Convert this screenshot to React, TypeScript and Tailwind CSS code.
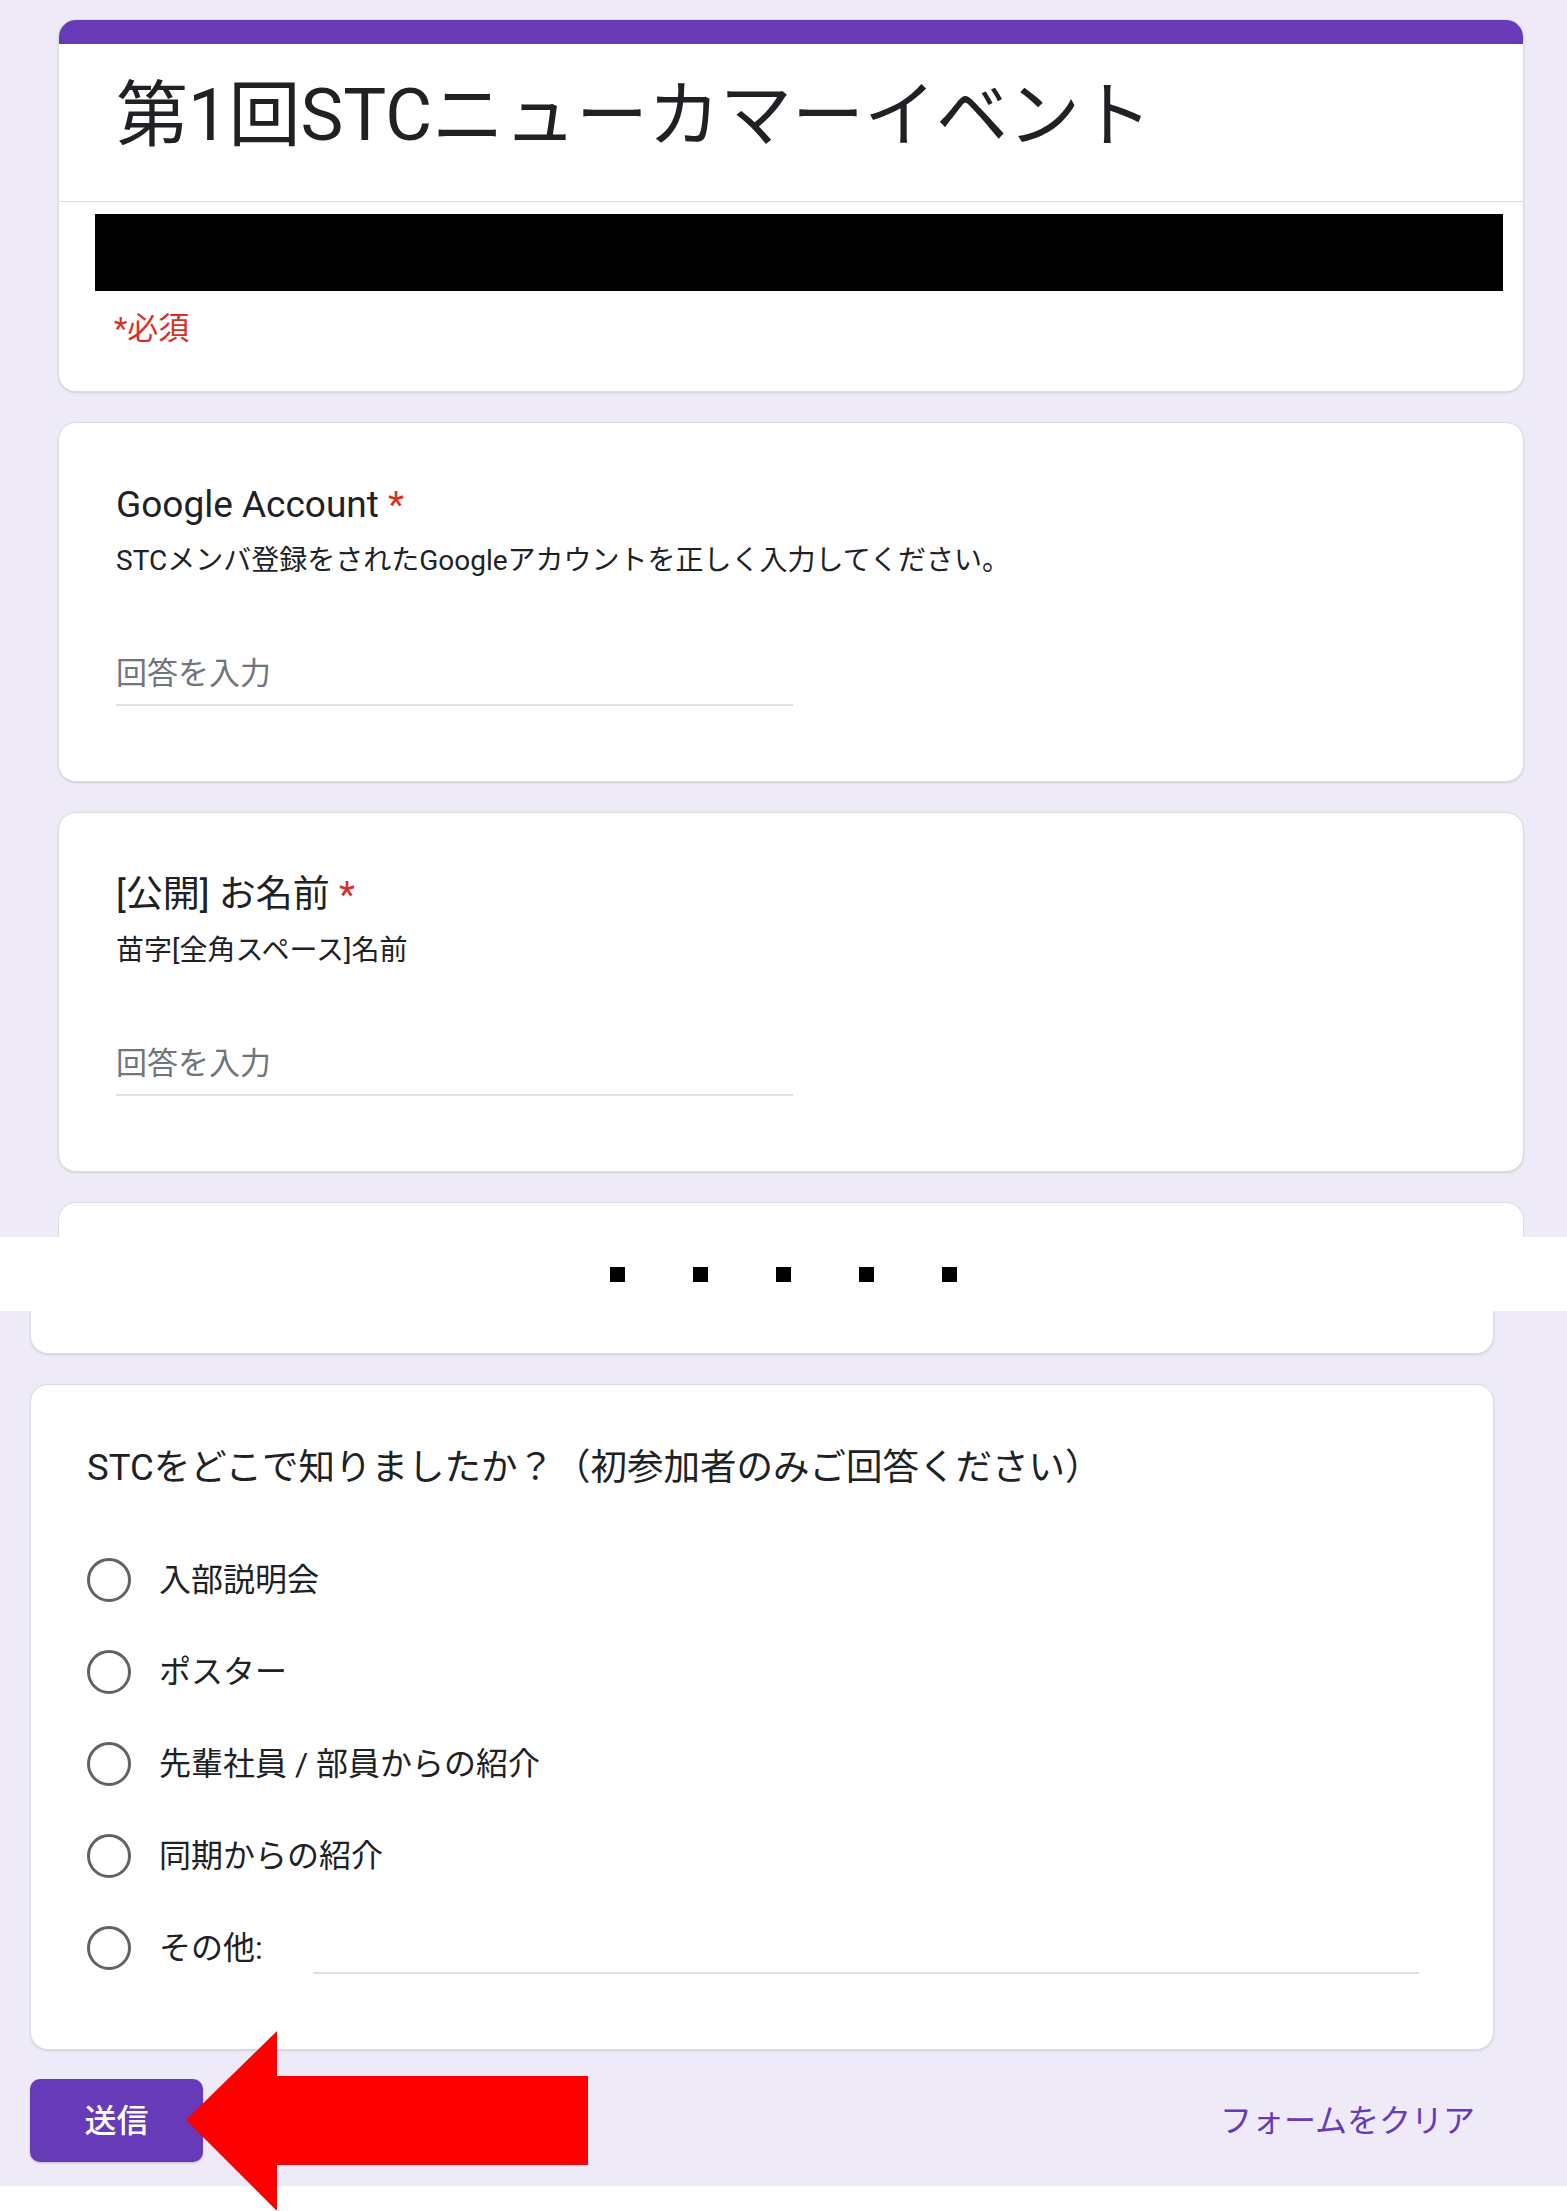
const cardBase =
  "rounded-[18px] border border-[#dadce0] bg-white shadow-[0_1px_2px_rgba(60,64,67,0.15)]";

type TextQuestionProps = {
  label: string;
  description: string;
};

function TextQuestion({ label, description }: TextQuestionProps) {
  return (
    <div className={`${cardBase} h-[360px] w-[1466px] pl-[57px] pt-[60px]`}>
      <div className="text-[37px] leading-[44px] text-[#202124]">
        {label} <span className="text-[#d93025]">*</span>
      </div>
      <div className="mt-[16px] text-[28px] leading-[36px] text-[#202124]">
        {description}
      </div>
      <div className="mt-[75px] w-[677px] border-b-2 border-[#e0e0e0] pb-[10px] text-[31px] leading-[40px] text-[#70757a]">
        回答を入力
      </div>
    </div>
  );
}

function Radio() {
  return (
    <span className="block h-[44px] w-[44px] shrink-0 rounded-full border-[3.5px] border-[#5f6368]" />
  );
}

const options = ["入部説明会", "ポスター", "先輩社員 / 部員からの紹介", "同期からの紹介"];

export default function App() {
  return (
    <div className="relative font-[family-name:Roboto,'Noto_Sans_CJK_JP',sans-serif] text-[#202124]">
      <div className="bg-[#eeeaf7] pb-[24px]">
        {/* upper screenshot */}
        <div className="flex flex-col gap-[30px] pl-[58px] pt-[19px]">
          <div className={`${cardBase} h-[373px] w-[1466px] overflow-hidden`}>
            <div className="h-[24px] bg-[#673ab7]" />
            <div className="pb-[42px] pl-[57px] pt-[29px] text-[72px] leading-[86px] text-[#202124]">
              第1回STCニューカマーイベント
            </div>
            <div className="border-t border-[#dadce0] pt-[12px]">
              <div className="ml-[36px] h-[77px] w-[1408px] bg-black" />
              <div className="mt-[20px] pl-[55px] text-[31px] leading-[36px] text-[#d93025]">
                *必須
              </div>
            </div>
          </div>

          <TextQuestion
            label="Google Account"
            description="STCメンバ登録をされたGoogleアカウントを正しく入力してください。"
          />
          <TextQuestion label="[公開] お名前" description="苗字[全角スペース]名前" />

          <div className="h-[35px] w-[1466px] rounded-t-[18px] border border-b-0 border-[#dadce0] bg-white" />
        </div>

        {/* cut marker */}
        <div className="flex h-[74px] items-center justify-center gap-[68px] bg-white">
          <span className="h-[15px] w-[15px] bg-black" />
          <span className="h-[15px] w-[15px] bg-black" />
          <span className="h-[15px] w-[15px] bg-black" />
          <span className="h-[15px] w-[15px] bg-black" />
          <span className="h-[15px] w-[15px] bg-black" />
        </div>

        {/* lower screenshot */}
        <div className="pl-[30px]">
          <div className="h-[43px] w-[1464px] rounded-b-[18px] border border-t-0 border-[#dadce0] bg-white shadow-[0_1px_2px_rgba(60,64,67,0.15)]" />

          <div className={`${cardBase} mt-[30px] h-[666px] w-[1464px] pl-[56px] pr-[74px] pt-[61px]`}>
            <div className="text-[36.5px] leading-[44px]">
              STCをどこで知りましたか？（初参加者のみご回答ください）
            </div>
            <div className="mt-[44px] flex flex-col">
              {options.map((o) => (
                <div key={o} className="flex h-[92px] items-center">
                  <Radio />
                  <span className="ml-[28px] text-[32px] leading-[40px]">{o}</span>
                </div>
              ))}
              <div className="flex h-[92px] items-center">
                <Radio />
                <span className="ml-[28px] text-[32px] leading-[40px]">その他:</span>
                <div className="ml-[50px] h-[52px] flex-1 border-b-2 border-[#e0e0e0]" />
              </div>
            </div>
          </div>

          <div className="mt-[29px] flex w-[1464px] items-center justify-between">
            <button className="h-[83px] w-[173px] rounded-[10px] bg-[#673ab7] text-[32px] font-medium text-white shadow-[0_1px_2px_rgba(60,64,67,0.3)]">
              送信
            </button>
            <span className="mr-[19px] text-[32px] text-[#673ab7]">フォームをクリア</span>
          </div>
        </div>
      </div>
      <div className="h-[24px] bg-white" />

      {/* annotation arrow */}
      <svg
        className="absolute left-[186px] top-[2031px]"
        width="402"
        height="180"
        viewBox="0 0 402 180"
      >
        <polygon points="0,89 91,0 91,45 402,45 402,134 91,134 91,180" fill="#ff0000" />
      </svg>
    </div>
  );
}
